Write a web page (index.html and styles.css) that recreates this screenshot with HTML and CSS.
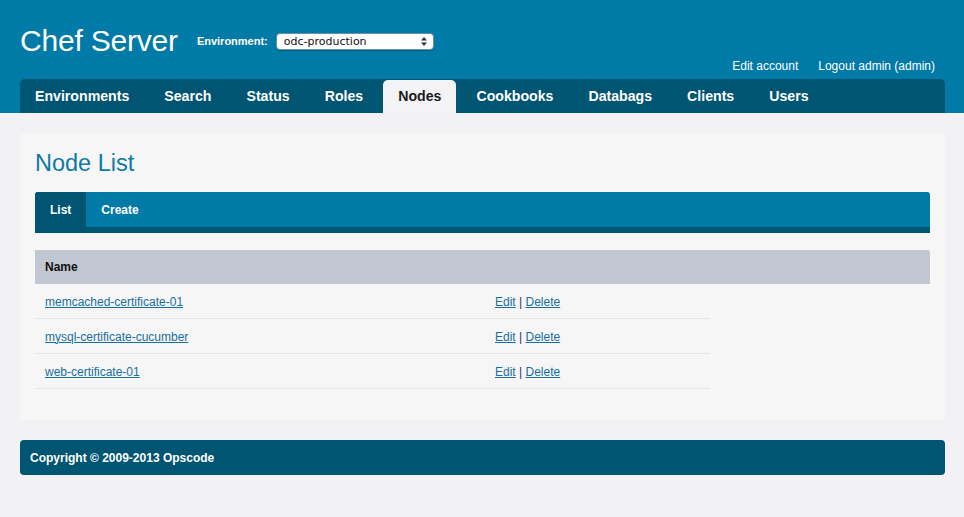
FILE: index.html
```html
<!DOCTYPE html>
<html>
<head>
<meta charset="utf-8">
<link rel="stylesheet" href="styles.css">
</head>
<body>
<header class="header">
  <div class="topbar">
    <h1 class="brand">Chef Server</h1>
    <label class="env-label">Environment:</label>
    <div class="select">
      <span class="select-text">odc-production</span>
      <svg class="select-arrows" width="6" height="9" viewBox="0 0 6 9"><path d="M0 3.5 L3 0 L6 3.5 Z M0 5.5 L3 9 L6 5.5 Z" fill="#333"/></svg>
    </div>
  </div>
  <div class="userlinks">
    <a class="ulink">Edit account</a>
    <a class="ulink">Logout admin (admin)</a>
  </div>
  <nav class="nav">
    <a class="tab">Environments</a>
    <a class="tab">Search</a>
    <a class="tab">Status</a>
    <a class="tab">Roles</a>
    <a class="tab active">Nodes</a>
    <a class="tab">Cookbooks</a>
    <a class="tab">Databags</a>
    <a class="tab">Clients</a>
    <a class="tab">Users</a>
  </nav>
</header>
<main class="main">
  <section class="panel">
    <h2 class="title">Node List</h2>
    <div class="subnav">
      <a class="subtab active">List</a>
      <a class="subtab">Create</a>
    </div>
    <div class="thead">Name</div>
    <div class="rows">
      <div class="row"><div class="cell"><a class="link">memcached-certificate-01</a></div><div class="cell"><a class="link">Edit</a> | <a class="link">Delete</a></div></div>
      <div class="row"><div class="cell"><a class="link">mysql-certificate-cucumber</a></div><div class="cell"><a class="link">Edit</a> | <a class="link">Delete</a></div></div>
      <div class="row"><div class="cell"><a class="link">web-certificate-01</a></div><div class="cell"><a class="link">Edit</a> | <a class="link">Delete</a></div></div>
    </div>
  </section>
  <footer class="footer">Copyright © 2009-2013 Opscode</footer>
</main>
</body>
</html>
```
FILE: styles.css
```css
* { box-sizing: border-box; }
body {
  margin: 0;
  background: #f2f2f4;
  font-family: "Liberation Sans", Arial, sans-serif;
  color: #222;
}
.header {
  background: #007aa7;
  padding: 0 19px 0 20px;
}
.topbar {
  display: flex;
  align-items: center;
  height: 58px;
  padding-top: 24px;
}
.brand {
  margin: 0;
  font-size: 30px;
  font-weight: normal;
  color: #fff;
  line-height: 34px;
  letter-spacing: -0.2px;
}
.env-label {
  margin-left: 19px;
  font-size: 11px;
  font-weight: bold;
  color: #fff;
}
.select {
  margin-left: 8px;
  width: 158px;
  height: 17px;
  background: #fff;
  border-radius: 4px;
  border: 1px solid #6a8da0;
  display: flex;
  align-items: center;
  justify-content: space-between;
  padding: 0 6px 0 7px;
  box-shadow: 0 1px 1px rgba(0,0,0,0.2);
}
.select-text {
  font-family: "DejaVu Sans", sans-serif;
  font-size: 11px;
  color: #111;
  line-height: 15px;
}
.userlinks {
  display: flex;
  justify-content: flex-end;
  gap: 20px;
  padding-right: 10px;
  height: 21px;
  line-height: 16px;
  padding-bottom: 5px;
}
.ulink {
  color: #fff;
  font-size: 12px;
}
.nav {
  display: flex;
  height: 34px;
  background: #005572;
  border-radius: 5px 5px 0 0;
}
.tab {
  padding: 0 15px;
  margin-right: 5px;
  line-height: 34px;
  font-size: 14.15px;
  font-weight: bold;
  color: #fff;
}
.tab.active {
  background: #f3f3f5;
  color: #1a1a1a;
  border-radius: 5px 5px 0 0;
  margin-top: 1px;
  line-height: 33px;
}
.main {
  padding: 21px 19px 0 20px;
}
.panel {
  background: #f6f6f6;
  padding: 15px 15px 31px 15px;
}
.title {
  margin: 0;
  font-size: 23.5px;
  font-weight: normal;
  color: #0f7aa6;
  line-height: 28px;
  height: 43px;
}
.subnav {
  display: flex;
  height: 41px;
  background: #007aa7;
  border-bottom: 6px solid #005572;
  border-radius: 3px 3px 0 0;
  margin-bottom: 17px;
}
.subtab {
  padding: 0 15px;
  line-height: 36px;
  font-size: 12px;
  font-weight: bold;
  color: #fff;
}
.subtab.active {
  background: #005572;
  border-radius: 3px 0 0 0;
}
.thead {
  height: 34px;
  line-height: 35px;
  background: #c1c7d0;
  border-radius: 0 3px 0 0;
  padding-left: 10px;
  font-size: 12px;
  font-weight: bold;
  color: #111;
}
.rows {
  width: 675px;
}
.row {
  display: grid;
  grid-template-columns: 450px 225px;
  height: 35px;
  border-bottom: 1px solid #e6e6e6;
  align-items: center;
  padding-top: 1px;
  font-size: 12px;
  color: #3a2f80;
}
.cell {
  padding-left: 10px;
}
.link {
  color: #17709c;
  text-decoration: underline;
}
.footer {
  margin-top: 20px;
  height: 35px;
  line-height: 37px;
  background: #005572;
  border-radius: 4px;
  padding-left: 10px;
  font-size: 12px;
  font-weight: bold;
  color: #fff;
}
```
